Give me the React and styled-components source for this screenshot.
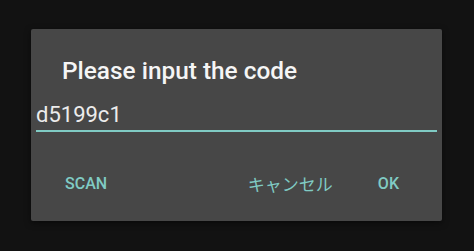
import React, { useState } from "react";
import styled, { createGlobalStyle } from "styled-components";

const GlobalStyle = createGlobalStyle`
  html, body {
    margin: 0;
    padding: 0;
    background: #121212;
  }
  body {
    font-family: Roboto, "Noto Sans CJK JP", sans-serif;
  }
`;

export default function App() {
  const [code, setCode] = useState("d5199c1");

  return (
    <Screen>
      <GlobalStyle />
      <Dialog>
        <Title>Please input the code</Title>
        <CodeInput value={code} onChange={(e) => setCode(e.target.value)} spellCheck={false} />
        <Actions>
          <ActionButton>SCAN</ActionButton>
          <Spacer />
          <ActionButton jp>キャンセル</ActionButton>
          <ActionButton>OK</ActionButton>
        </Actions>
      </Dialog>
    </Screen>
  );
}

const Screen = styled.div`
  width: 474px;
  height: 251px;
  box-sizing: border-box;
  padding: 29px 0 0 31px;
  background: #121212;
  overflow: hidden;
`;

const Dialog = styled.div`
  width: 411px;
  height: 192px;
  box-sizing: border-box;
  background: #474747;
  border-radius: 2px;
  box-shadow: 0 2px 6px rgba(0, 0, 0, 0.5);
  padding-top: 26px;
  display: flex;
  flex-direction: column;
`;

const Title = styled.h2`
  margin: 0 0 15px 31px;
  font-family: Roboto, sans-serif;
  font-weight: 500;
  font-size: 24.4px;
  line-height: 32px;
  color: #f5f5f5;
`;

const CodeInput = styled.input`
  margin: 0 5px;
  padding: 0 0 3px 0;
  height: 30px;
  box-sizing: border-box;
  border: none;
  border-bottom: 2px solid #80cbc4;
  background: transparent;
  outline: none;
  font-family: Roboto, sans-serif;
  font-size: 22px;
  line-height: 26px;
  color: #ececec;
`;

const Actions = styled.div`
  display: flex;
  align-items: center;
  gap: 45px;
  margin-top: 34px;
  padding: 0 43px 0 34px;
`;

const Spacer = styled.div`
  flex: 1;
`;

const ActionButton = styled.button`
  border: none;
  background: transparent;
  padding: 0;
  height: 36px;
  font-family: ${(p) => (p.jp ? '"Noto Sans CJK JP", sans-serif' : "Roboto, sans-serif")};
  font-weight: ${(p) => (p.jp ? 400 : 500)};
  font-size: ${(p) => (p.jp ? "17px" : "16px")};
  line-height: 36px;
  color: #80cbc4;
  cursor: pointer;
`;
